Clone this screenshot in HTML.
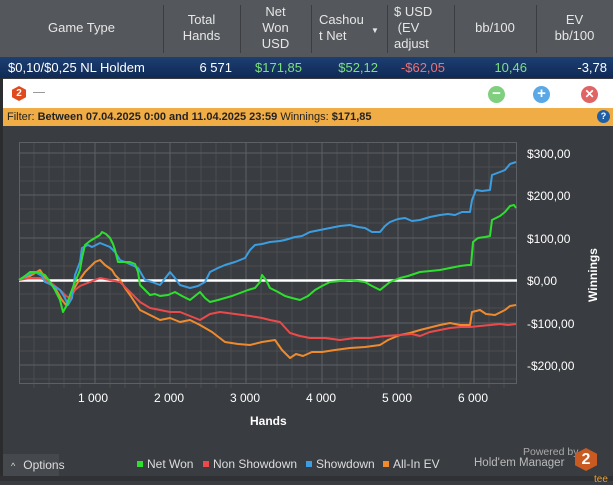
<!DOCTYPE html>
<html><head><meta charset="utf-8"><style>
*{margin:0;padding:0;box-sizing:border-box}
body{width:613px;height:481px;overflow:hidden;background:#393c40;font-family:"Liberation Sans",sans-serif;position:relative}
.hdr{position:absolute;left:0;top:0;width:613px;height:57px;background:#54575b;color:#e6e6e6;font-size:13px}
.hc{position:absolute;top:0;height:55px;display:flex;align-items:center;justify-content:center;text-align:center;line-height:16px}
.sep{position:absolute;top:5px;width:1px;height:48px;background:#3b3d40}
.row{position:absolute;left:0;top:57px;width:613px;height:21px;background:linear-gradient(#1d3f72,#0f2a55);color:#fff;font-size:13px}
.row span{position:absolute;top:3px}
.wbar{position:absolute;left:3px;top:79px;width:610px;height:29px;background:#fff}
.filt{position:absolute;left:3px;top:108px;width:610px;height:18px;background:#f0ac45;font-size:11px;color:#222;padding:3px 0 0 4px}
.btn{position:absolute;top:7px;width:17px;height:17px;border-radius:50%;color:#fff;font-size:15px;line-height:16px;text-align:center;font-weight:bold}
.win{position:absolute;left:3px;top:126px;width:610px;height:350px;background:#393c40}
.yl{position:absolute;left:527px;color:#fff;font-size:12px}
.xl{position:absolute;top:391px;color:#fff;font-size:12px}
.leg{position:absolute;top:457px;color:#ddd;font-size:12px;white-space:nowrap}
.sq{position:absolute;top:461px;width:6px;height:6px}
</style></head><body>
<div style="position:absolute;left:0;top:0;width:3px;height:481px;background:#2a2c2e"></div>
<div class="hdr">
<div class="hc" style="left:0;width:163px">Game Type</div>
<div class="hc" style="left:163px;width:77px">Total<br>Hands</div>
<div class="hc" style="left:240px;width:71px">Net<br>Won<br>USD</div>
<div class="hc" style="left:311px;width:76px;justify-content:flex-start;padding-left:8px;text-align:left">Cashou<br>t Net<span style="position:absolute;left:60px;top:23px;font-size:8px">▼</span></div>
<div class="hc" style="left:387px;width:67px;justify-content:flex-start;padding-left:7px;text-align:left">$ USD<br>&nbsp;(EV<br>adjust</div>
<div class="hc" style="left:454px;width:82px">bb/100</div>
<div class="hc" style="left:536px;width:77px">EV<br>bb/100</div>
<div class="sep" style="left:163px"></div><div class="sep" style="left:240px"></div><div class="sep" style="left:311px"></div><div class="sep" style="left:387px"></div><div class="sep" style="left:454px"></div><div class="sep" style="left:536px"></div>
</div>
<div class="row">
<span style="left:8px">$0,10/$0,25 NL Holdem</span>
<span style="right:381px">6 571</span>
<span style="right:311px;color:#7ee07e">$171,85</span>
<span style="right:235px;color:#7ee07e">$52,12</span>
<span style="right:168px;color:#f07070">-$62,05</span>
<span style="right:86px;color:#7ee07e">10,46</span>
<span style="right:6px">-3,78</span>
</div>
<div class="wbar">
<div style="position:absolute;left:9px;top:7px;width:14px;height:15px;background:#e04a1e;clip-path:polygon(50% 0,100% 25%,100% 75%,50% 100%,0 75%,0 25%);color:#fff;font-size:10px;font-weight:bold;text-align:center;line-height:15px">2</div>
<div style="position:absolute;left:30px;top:13px;width:12px;height:1px;background:#999"></div>
<div class="btn" style="left:485px;background:#7fcf7f">−</div>
<div class="btn" style="left:530px;background:#5aa8e6">+</div>
<div class="btn" style="left:578px;background:#e06464;font-size:12px">✕</div>
</div>
<div class="filt">Filter: <b>Between 07.04.2025 0:00 and 11.04.2025 23:59</b> Winnings: <b>$171,85</b>
<div style="position:absolute;right:3px;top:2px;width:13px;height:13px;border-radius:50%;background:#1e5fa8;color:#fff;font-size:9px;text-align:center;line-height:13px;font-weight:bold">?</div></div>
<div class="win"></div>
<svg style="position:absolute;left:0;top:0" width="613" height="481">
<g stroke="#4a4d51" stroke-width="1">
<path d="M19,167H517M19,181H517M19,209H517M19,223H517M19,252H517M19,266H517M19,294H517M19,308H517M19,337H517M19,351H517M19,379H517"/>
<path d="M34,142V388M49,142V388M64,142V388M80,142V388M110,142V388M125,142V388M140,142V388M155,142V388M186,142V388M201,142V388M216,142V388M231,142V388M261,142V388M277,142V388M292,142V388M307,142V388M337,142V388M352,142V388M368,142V388M383,142V388M413,142V388M428,142V388M443,142V388M459,142V388M489,142V388M504,142V388"/>
</g>
<g stroke="#5d6064" stroke-width="1" fill="none">
<path d="M19,153H517M19,195H517M19,238H517M19,323H517M19,365H517"/>
<path d="M95,142V383M170,142V383M246,142V383M322,142V383M398,142V383M474,142V383"/>
<rect x="19.5" y="142.5" width="497" height="241"/>
</g>
<path d="M19,280.5H517" stroke="#fff" stroke-width="2.5"/>
<g fill="none" stroke-width="2" stroke-linejoin="round">
<polyline stroke="#f08a2c" points="19,280 30,276 40,270 48,282 55,288 62,300 66,305 72,292 78,282 85,272 95,262 100,260 105,265 112,270 115,275 120,280 125,288 130,295 140,310 150,315 160,320 170,318 180,322 190,320 200,325 212,332 225,342 238,344 250,345 262,342 275,340 282,350 290,358 296,354 303,356 312,352 322,352 335,350 350,348 365,347 380,345 388,340 400,335 410,333 420,330 432,327 440,325 450,323 460,325 470,325 472,312 480,310 486,314 495,315 505,310 510,306 516,305"/>
<polyline stroke="#ec4a4a" points="19,280 30,278 40,278 50,282 55,286 60,290 66,296 70,298 75,290 80,286 90,282 100,278 110,280 120,282 130,292 140,302 150,308 160,310 170,312 180,312 190,316 200,320 210,314 220,312 235,314 250,316 262,318 270,320 280,322 290,333 300,336 310,338 325,338 340,340 355,338 370,338 385,336 400,335 412,334 420,336 430,332 440,330 450,328 460,327 470,327 480,326 490,325 500,324 508,325 516,324"/>
<polyline stroke="#3c9ee0" points="19,280 28,275 35,272 42,276 45,282 52,285 60,290 65,298 68,305 72,298 75,275 80,262 82,248 88,245 92,247 100,243 105,245 110,247 115,252 120,260 125,262 132,265 138,268 145,280 152,282 160,285 170,272 175,278 180,285 190,288 198,286 205,282 210,272 218,268 225,265 235,262 245,258 250,250 255,245 262,244 270,242 280,241 285,240 295,237 302,236 310,232 320,230 330,228 340,226 350,225 358,227 365,228 372,232 380,232 385,226 390,222 398,219 405,218 412,221 420,220 430,217 440,215 448,214 455,215 462,212 470,212 472,200 476,190 482,191 490,190 492,175 500,172 505,170 510,164 516,162"/>
<polyline stroke="#2ee02e" points="19,280 25,276 30,272 38,272 45,275 50,282 55,290 60,300 63,312 67,305 70,295 75,282 80,270 82,258 85,245 90,241 95,238 100,235 102,232 106,234 110,238 113,244 115,250 117,258 118,262 125,262 130,262 135,264 138,272 140,285 145,290 150,295 155,294 160,296 168,295 175,292 182,296 190,300 195,296 200,292 205,298 210,302 218,300 225,298 232,296 240,293 248,290 255,288 260,282 262,275 266,280 270,288 278,292 285,296 292,298 300,300 308,296 315,290 322,286 330,282 340,281 350,280 358,281 365,282 372,286 380,290 385,286 390,282 395,280 400,278 408,276 420,272 430,271 440,270 450,268 460,266 468,265 471,265 473,242 478,238 485,237 490,236 492,220 500,216 505,212 510,206 514,205 516,208"/>
</g>
</svg>
<div class="yl" style="top:147px">$300,00</div>
<div class="yl" style="top:189px">$200,00</div>
<div class="yl" style="top:232px">$100,00</div>
<div class="yl" style="top:274px">$0,00</div>
<div class="yl" style="top:317px">-$100,00</div>
<div class="yl" style="top:359px">-$200,00</div>
<div style="position:absolute;left:563px;top:268px;color:#fff;font-size:12px;font-weight:bold;transform:rotate(-90deg);transform-origin:center;width:60px;text-align:center">Winnings</div>
<div class="xl" style="left:78px">1 000</div>
<div class="xl" style="left:154px">2 000</div>
<div class="xl" style="left:230px">3 000</div>
<div class="xl" style="left:306px">4 000</div>
<div class="xl" style="left:382px">5 000</div>
<div class="xl" style="left:458px">6 000</div>
<div style="position:absolute;left:250px;top:414px;color:#fff;font-size:12px;font-weight:bold">Hands</div>
<div style="position:absolute;left:3px;top:454px;width:56px;height:22px;background:#45484c;color:#ddd;font-size:12px;padding:4px 0 0 8px"><span style="font-size:9px;margin-right:8px">^</span>Options</div>
<div class="sq" style="left:137px;background:#2ee02e"></div><div class="leg" style="left:147px">Net Won</div>
<div class="sq" style="left:203px;background:#ec4a4a"></div><div class="leg" style="left:213px">Non Showdown</div>
<div class="sq" style="left:306px;background:#3c9ee0"></div><div class="leg" style="left:316px">Showdown</div>
<div class="sq" style="left:383px;background:#f08a2c"></div><div class="leg" style="left:393px">All-In EV</div>
<div style="position:absolute;left:523px;top:446px;color:#aaa;font-size:10.5px">Powered by</div>
<div style="position:absolute;left:474px;top:457px;color:#bbb;font-size:11.5px">Hold'em Manager</div>
<div style="position:absolute;left:575px;top:448px;width:22px;height:23px;background:#c95a22;clip-path:polygon(50% 0,100% 25%,100% 75%,50% 100%,0 75%,0 25%);color:#fff;font-size:16px;font-weight:bold;text-align:center;line-height:23px">2</div>
<div style="position:absolute;left:0;top:476px;width:613px;height:5px;background:#2f3134"></div>
<div style="position:absolute;left:594px;top:474px;color:#f0a020;font-size:10px">tee</div>
</body></html>
